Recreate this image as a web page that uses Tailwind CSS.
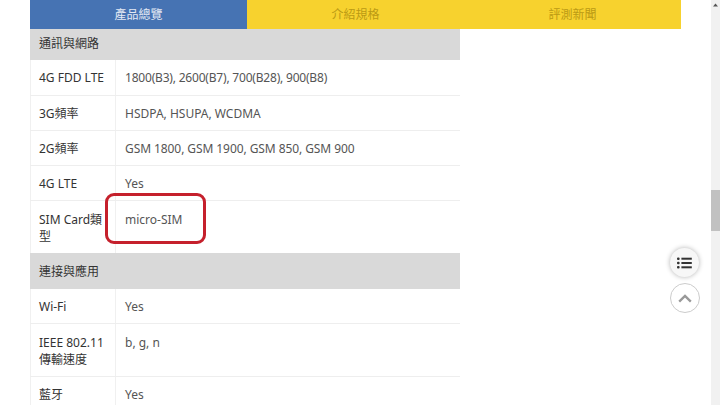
<!DOCTYPE html>
<html><head><meta charset="utf-8"><script src="https://cdn.jsdelivr.net/npm/@tailwindcss/browser@4"></script></head>
<body class="bg-white overflow-hidden">
<div class="relative w-[720px] h-[405px] overflow-hidden flex font-['Noto_Sans','Noto_Sans_CJK_TC',sans-serif] text-[12px] text-[#555]">
  <main class="w-[711px] pl-[30px] flex flex-col">
    <nav class="flex w-[651px] h-[29px] shrink-0 bg-[#f7d22e] text-[#bb9a14] leading-[30px] text-center">
      <div class="w-[217px] bg-[#4673b3] text-[#e3e9f3]">產品總覽</div>
      <div class="w-[217px]">介紹規格</div>
      <div class="w-[217px]">評測新聞</div>
    </nav>
    <section class="w-[430px] flex flex-col">
      <div class="h-[31px] bg-[#d9d9d9] pl-[9px] leading-[30px] text-[#333]">通訊與網路</div>
      <div class="flex h-[36px] border-b border-[#eee]"><div class="w-[86px] shrink-0 border-l border-r border-[#f0f0f0] pl-[8px] leading-[36px] text-[#333]">4G FDD LTE</div><div class="pl-[9px] leading-[36px] tracking-[-0.2px]">1800(B3), 2600(B7), 700(B28), 900(B8)</div></div>
      <div class="flex h-[35px] border-b border-[#eee]"><div class="w-[86px] shrink-0 border-l border-r border-[#f0f0f0] pl-[8px] leading-[35px] text-[#333]">3G頻率</div><div class="pl-[9px] leading-[35px]">HSDPA, HSUPA, WCDMA</div></div>
      <div class="flex h-[35px] border-b border-[#eee]"><div class="w-[86px] shrink-0 border-l border-r border-[#f0f0f0] pl-[8px] leading-[35px] text-[#333]">2G頻率</div><div class="pl-[9px] leading-[35px] tracking-[-0.08px]">GSM 1800, GSM 1900, GSM 850, GSM 900</div></div>
      <div class="flex h-[35px] border-b border-[#eee]"><div class="w-[86px] shrink-0 border-l border-r border-[#f0f0f0] pl-[8px] leading-[35px] text-[#333]">4G LTE</div><div class="pl-[9px] leading-[35px]">Yes</div></div>
      <div class="flex h-[52px]"><div class="w-[86px] shrink-0 border-l border-r border-[#f0f0f0] pl-[8px] pt-[10px] leading-[17px] text-[#333]">SIM Card類<br>型</div><div class="pl-[9px] pt-[10px] leading-[17px]">micro-SIM</div></div>
      <div class="h-[36px] bg-[#d9d9d9] pl-[9px] leading-[38px] text-[#333]">連接與應用</div>
      <div class="flex h-[35px] border-b border-[#eee]"><div class="w-[86px] shrink-0 border-l border-r border-[#f0f0f0] pl-[8px] leading-[36px] text-[#333]">Wi-Fi</div><div class="pl-[9px] leading-[36px]">Yes</div></div>
      <div class="flex h-[53px] border-b border-[#eee]"><div class="w-[86px] shrink-0 border-l border-r border-[#f0f0f0] pl-[8px] pt-[10px] leading-[17px] text-[#333]">IEEE 802.11<br>傳輸速度</div><div class="pl-[9px] pt-[10px] leading-[17px]">b, g, n</div></div>
      <div class="flex h-[35px]"><div class="w-[86px] shrink-0 border-l border-r border-[#f0f0f0] pl-[8px] leading-[36px] text-[#333]">藍牙</div><div class="pl-[9px] leading-[36px]">Yes</div></div>
    </section>
  </main>
  <aside class="relative w-[9px] bg-[#f1f1f1]">
    <svg class="absolute left-[2px] top-[3px]" width="5" height="4" viewBox="0 0 5 4"><path d="M2.5 0.5L5 3.5H0Z" fill="#555"/></svg>
    <div class="absolute left-0 top-[190px] w-[9px] h-[41px] bg-[#c1c1c1]"></div>
  </aside>
  <div class="absolute left-[105px] top-[193px] w-[101px] h-[51px] rounded-[9px] border-[3px] border-[#c5202c]"></div>
  <button class="absolute left-[670px] top-[248px] w-[29px] h-[29px] rounded-full bg-[#f7f7f7] shadow-[0_0_5px_rgba(0,0,0,0.3)] flex items-center justify-center">
    <svg width="15" height="12" viewBox="0 0 15 12" fill="#333"><rect x="0" y="0.5" width="2.6" height="2.4" rx="1"/><rect x="0" y="4.8" width="2.6" height="2.4" rx="1"/><rect x="0" y="9.1" width="2.6" height="2.4" rx="1"/><rect x="4.4" y="0.7" width="10.4" height="2"/><rect x="4.4" y="5" width="10.4" height="2"/><rect x="4.4" y="9.3" width="10.4" height="2"/></svg>
  </button>
  <button class="absolute left-[670px] top-[283px] w-[30px] h-[30px] rounded-full bg-white border border-[#ccc] flex items-center justify-center">
    <svg width="14" height="9" viewBox="0 0 14 9" fill="none" stroke="#999" stroke-width="2.4"><path d="M1.2 7.6L7 2L12.8 7.6"/></svg>
  </button>
</div>
</body></html>
